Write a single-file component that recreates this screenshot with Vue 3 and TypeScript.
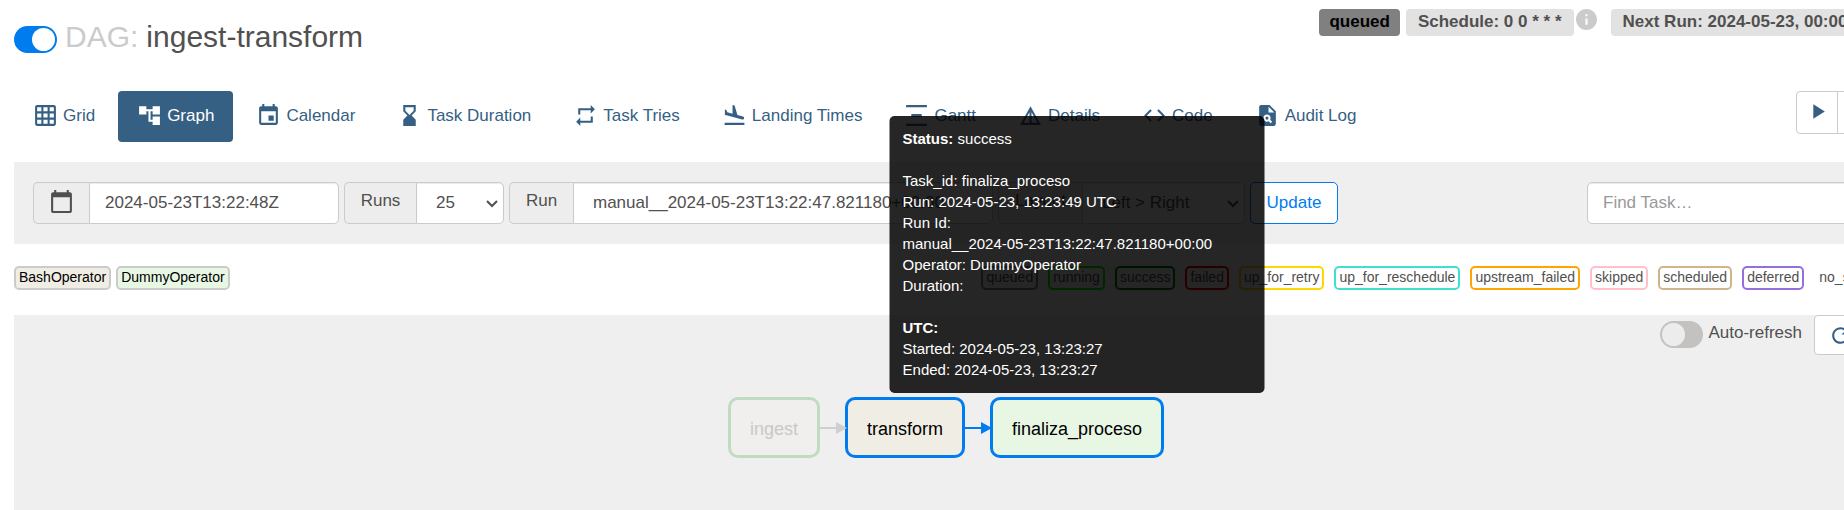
<script setup lang="ts">
import { ref } from 'vue'

interface Tab {
  label: string
  icon: string
}

interface TaskState {
  name: string
  color: string
}

const dagId = 'ingest-transform'
const isActive = ref(true)
const autoRefresh = ref(false)
const currentTab = ref('Graph')
const baseDate = ref('2024-05-23T13:22:48Z')
const numRuns = ref('25')
const runId = ref('manual__2024-05-23T13:22:47.821180+00:00')
const layout = ref('Left > Right')
const search = ref('')

const tabs: Tab[] = [
  {
    label: 'Grid',
    icon: 'M20 2H4c-1.1 0-2 .9-2 2v16c0 1.1.9 2 2 2h16c1.1 0 2-.9 2-2V4c0-1.1-.9-2-2-2zM8 20H4v-4h4v4zm0-6H4v-4h4v4zm0-6H4V4h4v4zm6 12h-4v-4h4v4zm0-6h-4v-4h4v4zm0-6h-4V4h4v4zm6 12h-4v-4h4v4zm0-6h-4v-4h4v4zm0-6h-4V4h4v4z',
  },
  { label: 'Graph', icon: 'M22 11V3h-7v3H9V3H2v8h7V8h2v10h4v3h7v-8h-7v3h-2V8h2v3h7z' },
  {
    label: 'Calendar',
    icon: 'M17 12h-5v5h5v-5zM16 1v2H8V1H6v2H5c-1.11 0-1.99.9-1.99 2L3 19c0 1.1.89 2 2 2h14c1.1 0 2-.9 2-2V5c0-1.1-.9-2-2-2h-1V1h-2zm3 18H5V8h14v11z',
  },
  {
    label: 'Task Duration',
    icon: 'M18 22l-.01-6L14 12l3.99-4.01L18 2H6v6l4 4-4 3.99V22h12zM8 7.5V4h8v3.5l-4 4-4-4z',
  },
  { label: 'Task Tries', icon: 'M7 7h10v3l4-4-4-4v3H5v6h2V7zm10 10H7v-3l-4 4 4 4v-3h12v-6h-2v4z' },
  {
    label: 'Landing Times',
    icon: 'M2.5 19h19v2h-19zm7.18-5.73l4.35 1.16 5.31 1.42c.8.21 1.62-.26 1.84-1.06.21-.8-.26-1.62-1.06-1.84l-5.31-1.42-2.76-9.02L10.12 2v8.28L5.15 8.95l-.93-2.32-1.45-.39v5.17l1.6.43 5.31 1.43z',
  },
  { label: 'Gantt', icon: 'M22 2v2H2V2h20zM7 10.5v3h10v-3H7zM2 20v2h20v-2H2z' },
  { label: 'Details', icon: 'M12 3L2 21h20L12 3zm1 5.92L18.6 19H13V8.92zm-2 0V19H5.4L11 8.92z' },
  {
    label: 'Code',
    icon: 'M9.4 16.6L4.8 12l4.6-4.6L8 6l-6 6 6 6 1.4-1.4zm5.2 0l4.6-4.6-4.6-4.6L16 6l6 6-6 6-1.4-1.4z',
  },
  {
    label: 'Audit Log',
    icon: 'M14 2H6c-1.1 0-2 .9-2 2v16c0 1.1.89 2 1.99 2H18c1.1 0 2-.9 2-2V8l-6-6zm1.04 17.45l-1.88-1.88c-1.33.71-3.01.53-4.13-.59-1.37-1.37-1.37-3.58 0-4.95 1.37-1.37 3.58-1.37 4.95 0 1.12 1.12 1.31 2.8.59 4.13l1.88 1.88-1.41 1.41zM13 9V3.5L18.5 9H13zM11.5 13a1.5 1.5 0 1 0 0 3 1.5 1.5 0 0 0 0-3z',
  },
]

const operators: TaskState[] = [
  { name: 'BashOperator', color: '#f0ede4' },
  { name: 'DummyOperator', color: '#e8f7e4' },
]

const states: TaskState[] = [
  { name: 'queued', color: 'gray' },
  { name: 'running', color: 'lime' },
  { name: 'success', color: 'green' },
  { name: 'failed', color: 'red' },
  { name: 'up_for_retry', color: 'gold' },
  { name: 'up_for_reschedule', color: 'turquoise' },
  { name: 'upstream_failed', color: 'orange' },
  { name: 'skipped', color: 'pink' },
  { name: 'scheduled', color: 'tan' },
  { name: 'deferred', color: 'mediumpurple' },
  { name: 'no_status', color: 'transparent' },
]
</script>

<template>
  <div class="page">
    <header class="header">
      <h1 class="title">
        <label class="switch">
          <input v-model="isActive" type="checkbox" aria-label="Pause or unpause DAG" />
          <span class="knob"></span>
        </label>
        <span class="prefix">DAG:</span>
        <span>{{ dagId }}</span>
      </h1>
      <div class="badges">
        <a class="badge queued" href="#runs">queued</a>
        <a class="badge" href="#schedule">Schedule: 0 0 * * *</a>
        <svg class="info" viewBox="2 2 20 20" aria-hidden="true">
          <path d="M12 2C6.48 2 2 6.48 2 12s4.48 10 10 10 10-4.48 10-10S17.52 2 12 2zm1 15h-2v-6h2v6zm0-8h-2V7h2v2z" />
        </svg>
        <span class="badge">Next Run: 2024-05-23, 00:00:00</span>
      </div>
    </header>

    <div class="navbar">
      <nav class="tabs">
        <a
          v-for="tab in tabs"
          :key="tab.label"
          href="#view"
          class="tab"
          :class="{ active: tab.label === currentTab }"
          @click.prevent="currentTab = tab.label"
        >
          <svg class="icon" viewBox="0 0 24 24" aria-hidden="true"><path :d="tab.icon" /></svg>
          {{ tab.label }}
        </a>
      </nav>
      <div class="actions">
        <button type="button" class="action" aria-label="Trigger DAG">
          <svg class="icon" viewBox="0 0 24 24" aria-hidden="true"><path d="M8 5v14l11-7z" /></svg>
        </button>
        <button type="button" class="action wide" aria-label="Delete DAG"></button>
      </div>
    </div>

    <form class="filters" @submit.prevent>
      <div class="group date">
        <label class="addon" for="base-date" aria-label="Base date">
          <svg class="icon" viewBox="0 0 24 24" aria-hidden="true">
            <path d="M20 3h-1V1h-2v2H7V1H5v2H4c-1.1 0-2 .9-2 2v16c0 1.1.9 2 2 2h16c1.1 0 2-.9 2-2V5c0-1.1-.9-2-2-2zm0 18H4V8h16v13z" />
          </svg>
        </label>
        <input id="base-date" v-model="baseDate" class="control" type="text" />
      </div>
      <div class="group runs">
        <label class="addon" for="num-runs">Runs</label>
        <select id="num-runs" v-model="numRuns" class="control">
          <option>5</option>
          <option>25</option>
          <option>50</option>
        </select>
        <svg class="chevron" viewBox="0 0 12 8" aria-hidden="true"><path d="M1 1l5 5 5-5" /></svg>
      </div>
      <div class="group run">
        <label class="addon" for="run-id">Run</label>
        <select id="run-id" v-model="runId" class="control">
          <option>manual__2024-05-23T13:22:47.821180+00:00</option>
        </select>
      </div>
      <div class="group arrange">
        <label class="addon" for="layout">Layout</label>
        <select id="layout" v-model="layout" class="control">
          <option>Left &gt; Right</option>
          <option>Top &gt; Bottom</option>
        </select>
        <svg class="chevron" viewBox="0 0 12 8" aria-hidden="true"><path d="M1 1l5 5 5-5" /></svg>
      </div>
      <button type="submit" class="update">Update</button>
      <input v-model="search" class="control search" type="text" placeholder="Find Task…" aria-label="Find Task" />
    </form>

    <div class="legend">
      <div class="operators">
        <span v-for="op in operators" :key="op.name" class="chip operator" :style="{ backgroundColor: op.color }">{{ op.name }}</span>
      </div>
      <div class="states">
        <span v-for="state in states" :key="state.name" class="chip" :style="{ borderColor: state.color }">{{ state.name }}</span>
      </div>
    </div>

    <main class="canvas">
      <div class="refresh-bar">
        <label class="refresh-label">
          <span class="switch">
            <input v-model="autoRefresh" type="checkbox" />
            <span class="knob"></span>
          </span>
          <span class="refresh-text">Auto-refresh</span>
        </label>
        <button type="button" class="refresh" aria-label="Refresh">
          <svg class="icon" viewBox="0 0 24 24" aria-hidden="true">
            <path d="M17.65 6.35C16.2 4.9 14.21 4 12 4c-4.42 0-7.99 3.58-7.99 8s3.57 8 7.99 8c3.73 0 6.84-2.55 7.73-6h-2.08c-.82 2.33-3.04 4-5.65 4-3.31 0-6-2.69-6-6s2.69-6 6-6c1.66 0 3.14.69 4.22 1.78L13 11h7V4l-2.35 2.35z" />
          </svg>
        </button>
      </div>

      <div class="graph">
        <div class="node bash faded">ingest</div>
        <svg class="edge faded-edge" viewBox="0 0 29 12" aria-hidden="true">
          <path d="M0 5h20v2H0z" /><path d="M18 0l11 6-11 6z" />
        </svg>
        <div class="node bash">transform</div>
        <svg class="edge" viewBox="0 0 29 12" aria-hidden="true">
          <path d="M0 5h20v2H0z" /><path d="M18 0l11 6-11 6z" />
        </svg>
        <div class="node dummy">
          finaliza_proceso
          <div class="tooltip" role="tooltip">
            <p><strong>Status:</strong> success</p>
            <p>
              Task_id: finaliza_proceso<br />
              Run: 2024-05-23, 13:23:49 UTC<br />
              Run Id: <span class="run-id">manual__2024-05-23T13:22:47.821180+00:00</span><br />
              Operator: DummyOperator<br />
              Duration:
            </p>
            <p>
              <strong>UTC:</strong><br />
              Started: 2024-05-23, 13:23:27<br />
              Ended: 2024-05-23, 13:23:27
            </p>
          </div>
        </div>
      </div>
    </main>
  </div>
</template>

<style>
body {
  overflow: hidden;
  background: #fff;
}
</style>

<style scoped>
* {
  box-sizing: border-box;
}

.page {
  display: flex;
  flex-direction: column;
  /* leaves the far end of each bar past the window's right edge */
  width: calc(100% + 59px);
  min-height: 100vh;
  padding: 0 14px;
  color: #51504f;
  font: 17px/24px "Liberation Sans", Arial, sans-serif;
}

input,
select,
button {
  font: inherit;
  color: inherit;
}

svg {
  display: block;
  flex: none;
  fill: currentColor;
}

.icon {
  width: 25px;
  height: 25px;
}

.header {
  display: flex;
  justify-content: space-between;
  height: 91px;
}

.title {
  display: flex;
  align-items: center;
  gap: 8px;
  height: 36px;
  margin: 19px 0 0;
  font-size: 30px;
  font-weight: 400;
  line-height: 36px;
}

.prefix {
  color: #cbcbcb;
}

.switch {
  position: relative;
  display: block;
  width: 43px;
  height: 27px;
}

.title .switch {
  margin-top: 5px;
}

.switch input {
  position: absolute;
  inset: 0;
  width: 100%;
  height: 100%;
  margin: 0;
  opacity: 0;
}

.knob {
  display: flex;
  height: 100%;
  padding: 2px;
  border-radius: 14px;
  background: #c4c2c1;
}

.knob::before {
  width: 23px;
  height: 23px;
  border-radius: 50%;
  background: #ececec;
  content: "";
}

input:checked + .knob {
  justify-content: flex-end;
  background: #017cee;
}

input:checked + .knob::before {
  background: #fff;
}

.badges {
  display: flex;
  align-items: flex-start;
  padding: 9px 5px 0 0;
}

.badge {
  height: 27px;
  padding: 0 12px;
  border-radius: 4px;
  background: #e2e2e2;
  color: #51504f;
  font-weight: 700;
  line-height: 25px;
  text-decoration: none;
  white-space: nowrap;
}

.badge.queued {
  margin-right: 6px;
  padding: 0 10px;
  background: #808080;
  color: #000;
}

.info {
  width: 21px;
  height: 21px;
  margin: 0 14px 0 2px;
  color: #cbcbcb;
}

.navbar {
  display: flex;
  justify-content: space-between;
  height: 71px;
}

.tabs {
  display: flex;
  align-items: flex-start;
  gap: 4px;
}

.tab {
  display: flex;
  align-items: center;
  gap: 5px;
  height: 51px;
  padding: 0 19px 2px;
  border-radius: 4px;
  color: #365f84;
  text-decoration: none;
  white-space: nowrap;
}

.tab.active {
  background: #365f84;
  color: #fff;
}

.actions {
  display: flex;
}

.action {
  display: flex;
  align-items: center;
  justify-content: center;
  width: 42px;
  height: 43px;
  padding: 0 0 3px;
  border: 1px solid #cbcbcb;
  border-radius: 4px 0 0 4px;
  background: #fff;
  color: #365f84;
}

.action.wide {
  width: 52px;
  margin-left: -1px;
  border-radius: 0 4px 4px 0;
}

.filters {
  display: flex;
  align-items: center;
  gap: 5px;
  padding: 20px 19px;
  background: #efefef;
}

.group {
  position: relative;
  display: flex;
}

.addon {
  display: flex;
  flex: none;
  justify-content: center;
  height: 42px;
  padding: 6px 15px 0;
  border: 1px solid #cbcbcb;
  border-right: 0;
  border-radius: 5px 0 0 5px;
  background: #ededed;
}

.control {
  min-width: 0;
  height: 42px;
  padding: 0 15px;
  border: 1px solid #cbcbcb;
  border-radius: 5px;
  background-color: #fff;
  box-shadow: inset 0 1px 1px rgba(0, 0, 0, 0.08);
}

.group .control {
  flex: 1;
  border-radius: 0 5px 5px 0;
}

select.control {
  padding: 0 19px;
  appearance: none;
}

.chevron {
  position: absolute;
  top: 18px;
  right: 6px;
  width: 12px;
  height: 8px;
  fill: none;
  stroke: currentColor;
  stroke-width: 2;
  pointer-events: none;
}

.control::placeholder {
  color: #999;
  opacity: 1;
}

.date {
  width: 306px;
}

.runs {
  width: 160px;
}

.runs .addon {
  width: 72px;
}

.run {
  width: 484px;
}

.run .addon {
  width: 64px;
}

.arrange {
  width: 247px;
}

.arrange .addon {
  width: 84px;
}

.update {
  width: 88px;
  height: 42px;
  padding: 0;
  border: 1px solid #017cee;
  border-radius: 5px;
  background: #fff;
  color: #017cee;
}

.search {
  width: 283px;
  margin-left: auto;
}

.legend {
  display: flex;
  justify-content: space-between;
  padding: 22px 4px 25px 0;
}

.operators,
.states {
  display: flex;
  gap: 5px;
}

.states {
  gap: 10px;
}

.chip {
  height: 24px;
  padding: 0 3px;
  border: 2px solid #cbcbcb;
  border-radius: 5px;
  font-size: 14px;
  line-height: 19px;
}

.operator {
  color: #000;
}

.canvas {
  display: flex;
  flex: 1;
  flex-direction: column;
  background: #efefef;
}

.refresh-bar {
  display: flex;
  align-items: flex-start;
  justify-content: flex-end;
  gap: 12px;
  margin-bottom: 42px;
}

.refresh-label {
  display: flex;
  gap: 5px;
  padding-top: 6px;
}

.refresh-text {
  line-height: 24px;
}

.refresh {
  display: flex;
  align-items: center;
  width: 75px;
  height: 40px;
  padding: 0 13px;
  border: 1px solid #cbcbcb;
  border-radius: 4px;
  background: #fff;
  color: #365f84;
}

.graph {
  display: flex;
  align-items: center;
  justify-content: center;
  padding-right: 11px;
}

.node {
  position: relative;
  height: 61px;
  padding: 17px 19px 0;
  border: 3px solid #017cee;
  border-radius: 10px;
  color: #000;
  font-size: 18px;
  line-height: 24px;
}

.bash {
  background: #f0ede4;
}

.dummy {
  background: #e8f7e4;
}

.faded {
  border-color: #c0dcc0;
  background: #f0efed;
  color: #c8c8c7;
}

.edge {
  z-index: 1;
  width: 29px;
  height: 12px;
  margin: 0 -2px;
  color: #017cee;
}

.faded-edge {
  color: #cfcfcf;
}

.tooltip {
  position: absolute;
  bottom: calc(100% + 7px);
  left: 50%;
  z-index: 10;
  width: 375px;
  padding: 12px 13px 13px;
  border-radius: 5px;
  background: rgba(0, 0, 0, 0.85);
  color: #fff;
  font-size: 15px;
  line-height: 21px;
  transform: translateX(-50%);
}

.tooltip p {
  margin: 0 0 21px;
}

.tooltip p:last-child {
  margin-bottom: 0;
}

.run-id {
  display: inline-block;
}
</style>
